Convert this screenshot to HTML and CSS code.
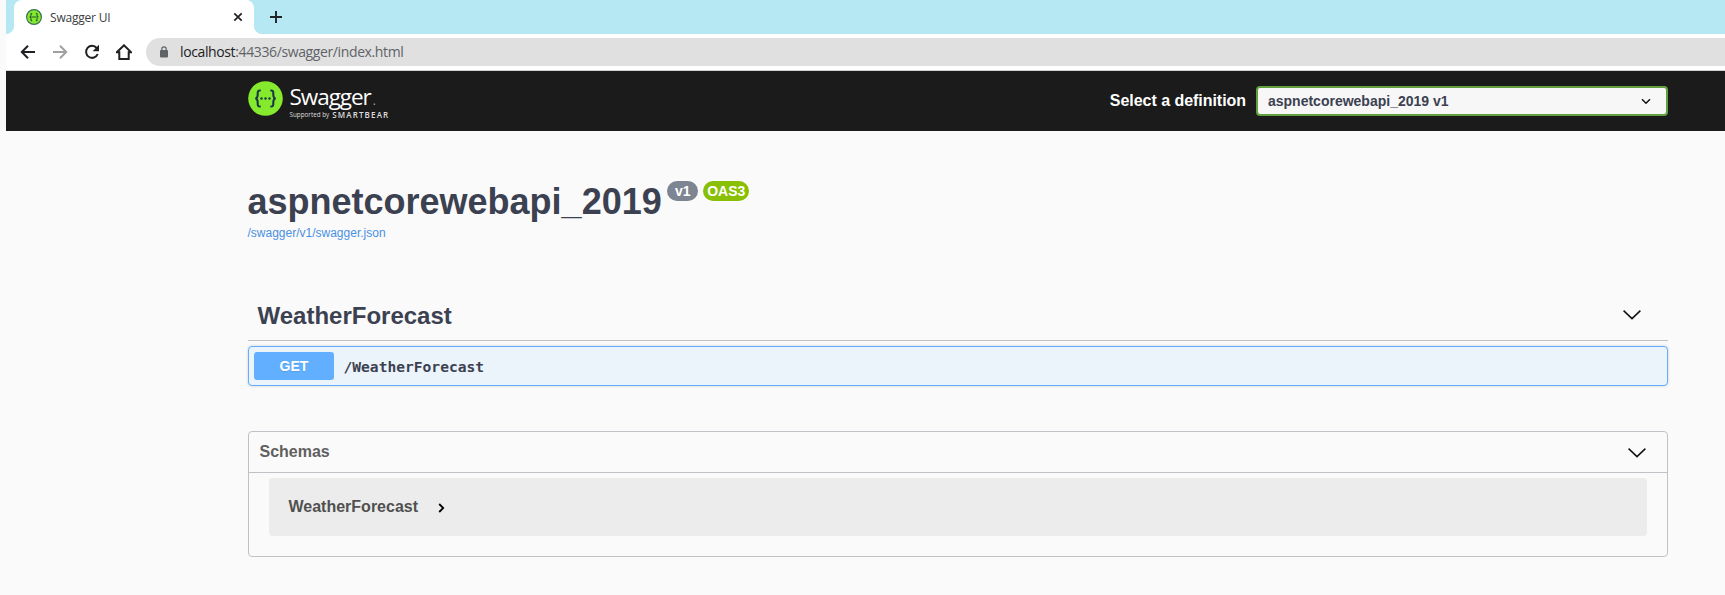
FILE: index.html
```html
<!DOCTYPE html>
<html lang="en">
<head>
<meta charset="utf-8">
<title>Swagger UI</title>
<link rel="stylesheet" href="styles.css">
</head>
<body>
<div class="window">
  <div class="tabstrip">
    <div class="tab">
      <svg class="favicon" width="16" height="16" viewBox="0 0 16 16"><circle cx="8" cy="8" r="7.4" fill="#85ea2d" stroke="#38705a" stroke-width="1.2"/><path d="M6.2 4.2C4.8 4.2 5 5 5 6.2S4.6 8 3.5 8C4.6 8 5 8.600 5 9.800S4.800 11.800 6.200 11.800M9.800 4.200C11.200 4.200 11 5 11 6.200S11.400 8 12.500 8C11.400 8 11 8.600 11 9.800S11.200 11.800 9.800 11.800M5.500 8h5" fill="none" stroke="#24562f" stroke-width="1.100"/></svg>
      <span class="tab-title">Swagger UI</span>
      <svg class="close" width="10" height="10" viewBox="0 0 10 10"><path d="M1.300 1.300l7.400 7.400M8.700 1.300L1.300 8.700" stroke="#202124" stroke-width="1.700"/></svg>
    </div>
    <svg class="plus" width="12" height="12" viewBox="0 0 12 12"><path d="M6 0v12M0 6h12" stroke="#202124" stroke-width="1.900"/></svg>
  </div>
  <div class="toolbar">
    <svg width="16" height="16" viewBox="0 0 16 16"><path d="M15 8H2.500M8 1.800L1.800 8L8 14.200" fill="none" stroke="#202124" stroke-width="2"/></svg>
    <svg width="16" height="16" viewBox="0 0 16 16"><path d="M1 8h12.500M8 1.800L14.200 8L8 14.200" fill="none" stroke="#a0a0a0" stroke-width="2"/></svg>
    <svg width="16" height="16" viewBox="0 0 16 16"><path d="M12.700 4A6 6 0 1 0 13.700 10" fill="none" stroke="#202124" stroke-width="2"/><path d="M15 .8v6.400H8.600z" fill="#202124"/></svg>
    <svg width="16" height="16" viewBox="0 0 16 16"><path d="M.8 8.300L8 1.300l7.200 7H12.700V15H3.300V8.300z" fill="none" stroke="#202124" stroke-width="2"/></svg>
    <div class="address">
      <svg width="10" height="12" viewBox="0 0 10 12"><rect x="1" y="4" width="8" height="7.500" rx="1" fill="#5f6368"/><path d="M2.800 5V3a2.200 2.200 0 0 1 4.400 0v2" fill="none" stroke="#5f6368" stroke-width="1.200"/></svg>
      <span class="url"><span class="host">localhost</span>:44336/swagger/index.html</span>
    </div>
  </div>
  <header class="topbar">
    <div class="wrapper topbar-inner">
      <div class="logo">
        <svg class="mark" width="35" height="35" viewBox="0 0 35 35"><circle cx="17.500" cy="17.500" r="17.300" fill="#85ea2d"/><path d="M12.700 9.500C9.700 9.300 9.600 10.500 9.700 13C9.800 16 9.500 17.300 7.300 17.500C9.500 17.700 9.800 19 9.700 22C9.600 24.500 9.700 25.700 12.700 25.500M22.300 9.500C25.300 9.300 25.400 10.500 25.300 13C25.200 16 25.500 17.300 27.700 17.500C25.500 17.700 25.200 19 25.300 22C25.400 24.500 25.300 25.700 22.300 25.500" fill="none" stroke="#173647" stroke-width="2.100"/><g fill="#173647"><circle cx="13.500" cy="17.500" r="1.200"/><circle cx="17.500" cy="17.500" r="1.200"/><circle cx="21.500" cy="17.500" r="1.200"/></g></svg>
        <div class="wordmark">
          <div class="brand">Swagger<span class="brand-dot">.</span></div>
          <div class="support"><span>Supported by</span><b>SMARTBEAR</b></div>
        </div>
      </div>
      <div class="definition">
        <span class="definition-label">Select a definition</span>
        <div class="select"><span>aspnetcorewebapi_2019 v1</span><svg width="10" height="7" viewBox="0 0 10 7"><path d="M1 1.200l4 4 4-4" fill="none" stroke="#111" stroke-width="1.500"/></svg></div>
      </div>
    </div>
  </header>
  <main class="wrapper">
    <div class="info">
      <h1 class="title">aspnetcorewebapi_2019</h1>
      <span class="badge version">v1</span>
      <span class="badge oas">OAS3</span>
    </div>
    <a class="spec-link">/swagger/v1/swagger.json</a>
    <div class="tag">
      <h2 class="tag-name">WeatherForecast</h2>
      <svg width="18" height="10" viewBox="0 0 18 10"><path d="M.6.600L9 8.600 17.400.600" fill="none" stroke="#111" stroke-width="1.500"/></svg>
    </div>
    <div class="operation">
      <span class="method">GET</span>
      <span class="path">/WeatherForecast</span>
    </div>
    <section class="schemas">
      <div class="schemas-head">
        <span>Schemas</span>
        <svg width="18" height="10" viewBox="0 0 18 10"><path d="M.6.600L9 8.600 17.400.600" fill="none" stroke="#111" stroke-width="1.500"/></svg>
      </div>
      <div class="model">
        <span>WeatherForecast</span>
        <svg class="model-arrow" width="7" height="10" viewBox="0 0 7 10"><path d="M1.200 1l4 4-4 4" fill="none" stroke="#000" stroke-width="1.800"/></svg>
      </div>
    </section>
  </main>
</div>
</body>
</html>
```
FILE: styles.css
```css
* { box-sizing: border-box; }
body { margin: 0; background: #fafafa; font-family: "Liberation Sans", Arial, sans-serif; color: #3b4151; height: 595px; overflow: hidden; }
svg { display: block; flex: none; }
span, b, a { white-space: nowrap; }
.window { margin-left: 6px; }
.tabstrip { height: 34px; display: flex; background: #b5e8f2; }
.tab { width: 240px; height: 34px; margin-left: 8px; padding: 0 12px; display: flex; align-items: center; background: #fff; border-radius: 8px 8px 0 0; position: relative; }
.tab::before, .tab::after { content: ""; position: absolute; bottom: 0; width: 8px; height: 8px; }
.tab::before { left: -8px; background: radial-gradient(circle at 0 0, #b5e8f2 7.500px, #fff 8.500px); }
.tab::after { right: -8px; background: radial-gradient(circle at 100% 0, #b5e8f2 7.500px, #fff 8.500px); }
.tab-title { margin: 0 0 0 8px; font: 12px "Open Sans", sans-serif; letter-spacing: -.2px; color: #3c4043; }
.close { margin-left: auto; margin-right: -1px; }
.plus { margin: 11px 0 0 16px; }
.toolbar { height: 37px; display: flex; align-items: center; gap: 16px; padding: 0 0 1px 14px; background: #fff; border-bottom: 1px solid #ced3cf; }
.address { flex: 1; height: 28px; margin-left: -2px; padding-left: 13px; border-radius: 14px 0 0 14px; background: #e0e0e0; display: flex; align-items: center; gap: 11px; }
.url { font: 14px "Open Sans", sans-serif; letter-spacing: -.38px; color: #5f6368; }
.host { color: #202124; }
.topbar { height: 60px; background: #1b1b1b; }
.wrapper { width: 1420px; margin-left: 242px; }
.topbar-inner { height: 60px; display: flex; justify-content: space-between; }
.logo { display: flex; gap: 7px; padding-top: 10px; margin-left: -.5px; color: #fff; }
.wordmark { padding-top: 1px; }
.brand { font: 22.500px/30px "Open Sans", sans-serif; letter-spacing: -1.050px; }
.brand-dot { margin-left: 2px; font-size: 12px; color: #aaa; }
.support { display: flex; align-items: center; gap: 3px; margin-top: -5px; font: 6.300px/8px "Open Sans", sans-serif; color: #ddd; }
.support b { font-size: 8px; font-weight: 600; letter-spacing: 1.150px; }
.definition { display: flex; align-items: center; }
.definition-label { font-size: 16px; font-weight: 700; color: #fff; margin-right: 10px; letter-spacing: -.04px; }
.select { width: 412px; height: 30px; padding: 0 15px 0 10px; border: 2px solid #62a03f; border-radius: 4px; background: #f7f7f7; display: flex; align-items: center; justify-content: space-between; font-size: 14px; font-weight: 700; }
.info { display: flex; padding-top: 50px; height: 94px; }
.title { margin: 1px 5.500px 0 -.5px; font-size: 36px; line-height: 40px; }
.badge { height: 20px; border-radius: 10px; color: #fff; font-size: 14px; line-height: 20px; font-weight: 700; text-align: center; }
.version { width: 31px; margin-right: 5px; background: #7d8492; }
.oas { width: 46px; background: #89bf04; }
.spec-link { display: block; margin-left: -.5px; font-size: 12px; line-height: 16px; color: #4990e2; }
.tag { height: 60px; margin-top: 40px; padding: 0 27px 0 9.500px; border-bottom: 1px solid #bfc0c3; display: flex; align-items: center; justify-content: space-between; }
.tag-name { margin: 11px 0 0; font-size: 24px; line-height: 28px; }
.tag svg { margin-top: 8px; }
.operation { height: 40px; margin-top: 5px; padding: 0 5px; border: 1px solid #61affe; border-radius: 4px; background: #ebf3fb; box-shadow: 0 0 3px rgba(0,0,0,.19); display: flex; align-items: center; }
.method { width: 80px; height: 28px; border-radius: 3px; background: #61affe; color: #fff; font-size: 14px; font-weight: 700; line-height: 28px; text-align: center; text-shadow: 0 1px 0 rgba(0,0,0,.1); }
.path { margin-left: 9.500px; font: bold 14.600px "DejaVu Sans Mono", monospace; }
.schemas { height: 126px; margin-top: 45px; border: 1px solid #c0c1c6; border-radius: 4px; }
.schemas-head { height: 41px; padding: 0 21px 0 10.500px; border-bottom: 1px solid #c0c1c6; display: flex; align-items: center; justify-content: space-between; font-size: 16px; font-weight: 700; color: #606060; }
.schemas-head svg { margin-top: 2px; }
.model { height: 58px; margin: 5px 20px 0; padding: 0 19.500px; border-radius: 4px; background: #ececec; display: flex; align-items: center; font-size: 16px; font-weight: 700; color: #505050; }
.model-arrow { margin-left: 20px; margin-top: 2px; }
```
